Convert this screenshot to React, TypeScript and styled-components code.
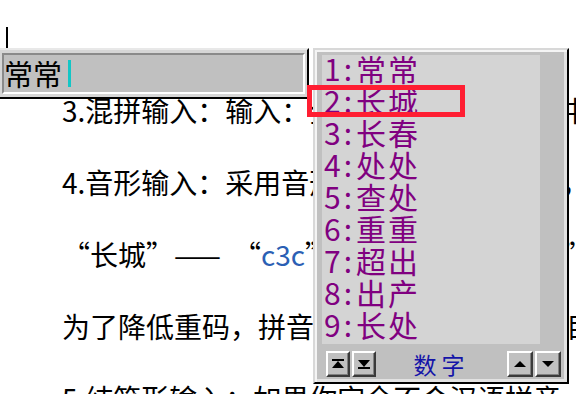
import React from 'react'

import styled, { createGlobalStyle } from 'styled-components'

const GlobalStyle = createGlobalStyle`
  html, body {
    margin: 0;
    padding: 0;
    background: #ffffff;
  }
  body {
    width: 576px;
    height: 394px;
    overflow: hidden;
    font-family: 'Noto Sans CJK SC', 'Noto Sans', sans-serif;
  }
`

const Page = styled.div`
  position: relative;
  width: 576px;
  height: 394px;
  overflow: hidden;
  background: #ffffff;
`

const Doc = styled.div`
  padding: 74px 0 0 62px;
  font-size: 28px;
  line-height: 72px;
  color: #000000;
`

const Para = styled.div`
  white-space: nowrap;
`

const Code = styled.span`
  color: #2b5fb4;
`

const Dash = styled.span`
  letter-spacing: 4px;
  margin-right: 8px;
`

const TextCaret = styled.div`
  position: absolute;
  left: 6px;
  top: 27px;
  width: 2px;
  height: 21px;
  background: #000000;
`

const CompWindow = styled.div`
  position: absolute;
  left: 0;
  top: 48px;
  width: 309px;
  height: 51px;
  box-sizing: border-box;
  display: flex;
  padding: 3px 2px 3px 2px;
  background: #d6d6d6;
  border-top: 2px solid #e8e8e8;
  border-right: 2px solid #000000;
  border-bottom: 2px solid #000000;
`

const CompField = styled.div`
  flex: 1;
  display: flex;
  align-items: center;
  background: #c0c0c0;
  border: 2px solid;
  border-color: #8a8a8a #ffffff #ffffff #8a8a8a;
  font-size: 29px;
  line-height: 1;
  color: #000000;
`

const CompCaret = styled.span`
  width: 3px;
  height: 27px;
  margin-left: 6px;
  background: #12c6c6;
`

const CandWindow = styled.div`
  position: absolute;
  left: 313px;
  top: 48px;
  width: 256px;
  height: 336px;
  box-sizing: border-box;
  display: flex;
  flex-direction: column;
  background: #c0c0c0;
  border: 2px solid;
  border-color: #d8d8d8 #000000 #000000 #d8d8d8;
  box-shadow: inset 2px 2px 0 #f4f4f4, inset -3px -3px 0 #e2e2e2;
`

const CandBody = styled.div`
  padding: 5px 27px 0 7px;
`

const CandList = styled.div`
  height: 289px;
  background: #d4d4d4;
  padding-left: 2px;
  font-size: 30px;
  color: #800080;
`

const CandRow = styled.div`
  display: flex;
  height: 32px;
  line-height: 26px;
  padding-bottom: 6px;
  box-sizing: border-box;
  white-space: nowrap;
`

const Cell = styled.span`
  display: inline-block;
  width: 16px;
  text-align: center;
`

const Word = styled.span`
  letter-spacing: 2px;
`

const CandBar = styled.div`
  flex: 1;
  display: flex;
  align-items: center;
  justify-content: space-between;
  padding: 2px 6px 0 11px;
`

const BtnGroup = styled.div`
  display: flex;
  gap: 2px;
`

const PageButton = styled.div<{ $wide?: boolean }>`
  width: ${p => (p.$wide ? 26 : 24)}px;
  height: 26px;
  box-sizing: border-box;
  display: flex;
  align-items: center;
  justify-content: center;
  background: #c0c0c0;
  border: 2px solid;
  border-color: #ffffff #3a3a3a #3a3a3a #ffffff;
  box-shadow: inset -1px -1px 0 #808080;
`

const ModeLabel = styled.span`
  font-size: 23px;
  letter-spacing: 5px;
  color: #1414a8;
  line-height: 1;
`

const Highlight = styled.div`
  position: absolute;
  left: 307px;
  top: 85px;
  width: 158px;
  height: 32px;
  box-sizing: border-box;
  border: 5px solid #ff1e32;
`

type Dir = 'first' | 'last' | 'up' | 'down'

const ArrowIcon = ({ dir }: { dir: Dir }) => (
  <svg width="14" height="12" viewBox="0 0 14 12">
    {dir === 'first' && (
      <>
        <rect x="1" y="1" width="12" height="2" fill="#000" />
        <polygon points="7,3 1,10 13,10" fill="#000" />
      </>
    )}
    {dir === 'last' && (
      <>
        <polygon points="1,2 13,2 7,9" fill="#000" />
        <rect x="1" y="9" width="12" height="2" fill="#000" />
      </>
    )}
    {dir === 'up' && <polygon points="7,3 1,9 13,9" fill="#000" />}
    {dir === 'down' && <polygon points="1,3 13,3 7,9" fill="#000" />}
  </svg>
)

const candidates = ['常常', '长城', '长春', '处处', '查处', '重重', '超出', '出产', '长处']

const App = () => (
  <Page>
    <GlobalStyle />
    <Doc>
      <Para>3.混拼输入：输入：全拼与简拼可混合目中</Para>
      <Para>4.音形输入：采用音形结合方式降低重码，</Para>
      <Para>
        “长城”<Dash>——</Dash>“<Code>c3c</Code>”，“长春”——“c3c”。
      </Para>
      <Para>为了降低重码，拼音输入时可以加上笔画目</Para>
      <Para>5.纯笔形输入：如果你完全不会汉语拼音</Para>
    </Doc>
    <TextCaret />
    <CompWindow>
      <CompField>
        常常
        <CompCaret />
      </CompField>
    </CompWindow>
    <CandWindow>
      <CandBody>
        <CandList>
          {candidates.map((word, i) => (
            <CandRow key={word + i}>
              <Cell>{i + 1}</Cell>
              <Cell>:</Cell>
              <Word>{word}</Word>
            </CandRow>
          ))}
        </CandList>
      </CandBody>
      <CandBar>
        <BtnGroup>
          <PageButton>
            <ArrowIcon dir="first" />
          </PageButton>
          <PageButton>
            <ArrowIcon dir="last" />
          </PageButton>
        </BtnGroup>
        <ModeLabel>数字</ModeLabel>
        <BtnGroup>
          <PageButton $wide>
            <ArrowIcon dir="up" />
          </PageButton>
          <PageButton $wide>
            <ArrowIcon dir="down" />
          </PageButton>
        </BtnGroup>
      </CandBar>
    </CandWindow>
    <Highlight />
  </Page>
)

export default App
